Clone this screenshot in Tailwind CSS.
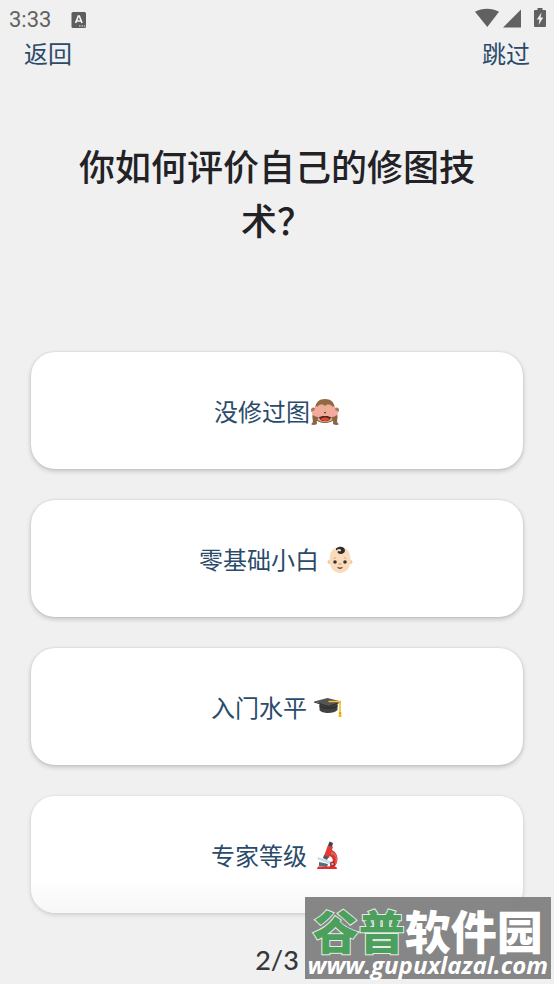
<!DOCTYPE html>
<html lang="zh-CN">
<head>
<meta charset="utf-8">
<meta name="viewport" content="width=device-width, initial-scale=1">
<title>修图技术评价</title>
<script src="https://cdn.jsdelivr.net/npm/@tailwindcss/browser@4"></script>
</head>
<body class="bg-[#f0f0f0] font-['Noto_Sans_CJK_SC',sans-serif] text-[#2a4b69]">
<div class="relative flex min-h-screen flex-col">
  <header>
    <div class="flex h-9 items-center justify-between pr-2 pl-[9px] text-[#616161]">
      <div class="flex items-center gap-5 pt-1">
        <span class="font-[Roboto,sans-serif] text-[22px] leading-6">3:33</span>
        <svg class="h-4 w-4" viewBox="0 0 16 16" aria-hidden="true"><rect x=".5" width="14.5" height="16" rx="1.5" fill="#5e5e5e"/><path d="M4.600 11 7.300 4h1L11 11M5.500 9h4.600" fill="none" stroke="#f4f4f4" stroke-width="1.700"/><path d="M8 14h1.500M10.500 14H12M13 14h1.200" stroke="#f4f4f4" stroke-width="1.200"/></svg>
      </div>
      <div class="flex items-center gap-1">
        <svg class="h-5 w-6" viewBox="0 0 24 20" fill="#616161" aria-hidden="true"><path d="M0 3.700C7-.3 17-.3 24 3.700L12.300 19Z"/></svg>
        <svg class="h-5 w-[19px]" viewBox="0 0 19 20" fill="#616161" aria-hidden="true"><path d="M18 1.500v18H0Z"/></svg>
        <svg class="ml-2 h-5 w-3" viewBox="0 0 12 20" aria-hidden="true"><path d="M3.500 0h5v2H11q1 0 1 1v15q0 1-1 1H1q-1 0-1-1V3q0-1 1-1h2.500Z" fill="#616161"/><path d="M7.500 4.500 2.800 11.500h2.700L4.600 17 9.200 9.500H6.500Z" fill="#f4f4f4"/></svg>
      </div>
    </div>
    <nav class="flex justify-between px-6 text-[24px] leading-[34px]">
      <button type="button">返回</button>
      <button type="button">跳过</button>
    </nav>
  </header>
  <main class="flex flex-col px-[31px] pt-[68px]">
    <h1 class="px-10 text-center text-[36px] leading-[54px] font-medium text-[#222226]">你如何评价自己的修图技术？</h1>
    <div class="mt-[106px] flex flex-col gap-[31px] text-[24px] leading-9">
      <button type="button" class="flex min-h-[117px] items-center justify-center rounded-3xl bg-white px-4 py-10 shadow-[0_2px_5px_rgba(0,0,0,0.2),0_0_2px_rgba(0,0,0,0.12)]">
        <span>没修过图</span>
        <svg class="h-[30px] w-[30px]" viewBox="0 0 30 30" role="img" aria-label="非礼勿视">
          <circle cx="3.500" cy="14" r="2.500" fill="#a77b56"/><circle cx="26.500" cy="14" r="2.500" fill="#a77b56"/>
          <path d="M15 3c7 0 10 4.500 10 11 3 3 2 13-10 13S2 17 5 14C5 7.500 8 3 15 3Z" fill="#916a45"/>
          <path d="M15 10c3-3 8-1 8 3 0 2-1 3 0 5 2 5-2 8-8 8s-10-3-8-8c1-2 0-3 0-5 0-4 5-6 8-3Z" fill="#e0b58c"/>
          <path d="M9 20h12c0 3.500-2.500 5.200-6 5.200S9 23.500 9 20Z" fill="#492b24"/><path d="M10.500 23c2-2 7-2 9 0-2 2.500-7 2.500-9 0Z" fill="#f44336"/>
          <path d="M13 16h4l-2 1.500Z" fill="#5a4032"/>
          <path d="M1 28c4-2 0-6 2-10l6 1c0 4-3 4-2 9q-4 2-6 0ZM29 28c-4-2 0-6-2-10l-6 1c0 4 3 4 2 9q4 2 6 0Z" fill="#8b6543"/>
          <path d="M3 19c-2-2-1-5 1-4l1-3c0-2 2-2 3-1 1-2 2-1 3 0 1-1 2 0 2 1 1 0 1 1 1 2v2c0 4-3 5-6 5-2 0-3-1-5-2ZM27 19c2-2 1-5-1-4l-1-3c0-2-2-2-3-1-1-2-2-1-3 0-1-1-2 0-2 1-1 0-1 1-1 2v2c0 4 3 5 6 5 2 0 3-1 5-2Z" fill="#f5aa9e"/>
        </svg>
      </button>
      <button type="button" class="flex min-h-[117px] items-center justify-center gap-[6px] rounded-3xl bg-white px-4 py-10 shadow-[0_2px_5px_rgba(0,0,0,0.2),0_0_2px_rgba(0,0,0,0.12)]">
        <span>零基础小白</span>
        <svg class="h-[30px] w-[30px]" viewBox="0 0 30 30" role="img" aria-label="婴儿">
          <circle cx="4.500" cy="18" r="2" fill="#f1c6a4"/><circle cx="25.500" cy="18" r="2" fill="#f1c6a4"/>
          <path d="M15 3c7 0 10.500 5 10.500 13S21 29 15 29 4.500 24 4.500 16 8 3 15 3Z" fill="#fadcbc"/>
          <path d="M11 4.500C15 1 20 3 20 6.500S15 11 13 9c-1.500-1.500 1-3 2-1.500 2-.5 1-2.500-1-2.500-1 0-2 1-3 1.500Z" fill="#302c2b"/>
          <circle cx="10" cy="18" r="1.800" fill="#3b3432"/><circle cx="20" cy="18" r="1.800" fill="#3b3432"/>
          <path d="M8.500 14.500q1-1 2.500-.5M19 14q1.500-.5 2.500.5" fill="none" stroke="#d6aa83"/><path d="M13.500 20h3" stroke="#e1a77c" stroke-width="1.500"/>
          <path d="M12 22.800q3 1.200 6 0-.8 2.200-3 2.200t-3-2.200Z" fill="#5f4940"/>
        </svg>
      </button>
      <button type="button" class="flex min-h-[117px] items-center justify-center gap-[6px] rounded-3xl bg-white px-4 py-10 shadow-[0_2px_5px_rgba(0,0,0,0.2),0_0_2px_rgba(0,0,0,0.12)]">
        <span>入门水平</span>
        <svg class="h-[30px] w-[30px]" viewBox="0 0 30 30" role="img" aria-label="学士帽">
          <path d="M6.500 11v7c2 4 15 4 18 0v-7Z" fill="#424242"/><path d="M6.500 13c5 3 13 3 18 0v2c-4 3-14 3-18 0Z" fill="#333"/>
          <path d="M1 9.500 14.500 6 28 9.500 15.500 14Z" fill="#555"/><path d="m1 9.500 14.500 4.500L28 9.500v1L15.500 15 1 10.500Z" fill="#303030"/>
          <path d="M15.500 9.500H27v12" fill="none" stroke="#fbc02d" stroke-width="1.700"/><path d="M26 20h2.200l.3 5h-3Z" fill="#f6b51c"/><path d="M26 21h2.200" stroke="#d68c12"/>
        </svg>
      </button>
      <button type="button" class="flex min-h-[117px] items-center justify-center gap-[6px] rounded-3xl bg-linear-to-b from-white from-70% to-[#f7f7f7] px-4 py-10 shadow-[0_2px_5px_rgba(0,0,0,0.13),0_0_2px_rgba(0,0,0,0.1)]">
        <span>专家等级</span>
        <svg class="h-[30px] w-[30px]" viewBox="0 0 30 30" role="img" aria-label="显微镜">
          <path d="M16 9c10 2 11 14 4 19h-5c7-5 6-11 0-13Z" fill="#dc2f2f"/>
          <path d="M18 12c6 2 7 9 3 13" fill="none" stroke="#f15b50" stroke-width="1.500"/>
          <path d="m15 5 5 2-4 11-5-2Z" fill="#e53935"/><path d="m16.500 1.500 3.500 1.500-1 4-4-1.500Z" fill="#37474f"/><path d="m11 15 4.500 2-1.500 3-4-2Z" fill="#455a64"/>
          <path d="m5 17 14 5-1 2.500L4 19Z" fill="#c4dce8"/><path d="m6 22 9 2-1 3-8-1Z" fill="#546e7a"/>
          <path d="M5 26.500h17q2 0 2 2.500H4Z" fill="#e22d30"/><circle cx="19.500" cy="24" r="2.500" fill="#ad2026"/><circle cx="19.500" cy="24" r="1.200" fill="#b0bec5"/><circle cx="19.500" cy="14" r="1.300" fill="#78909c"/>
        </svg>
      </button>
    </div>
  </main>
  <footer class="mt-auto pb-2 text-center font-[Lato,sans-serif] text-[27px] leading-8 font-medium text-[#37373b]">2/3</footer>
  <aside class="absolute right-[3px] bottom-[5px] flex flex-col items-center bg-[#808080]/95 px-[3px] pt-[10px] whitespace-nowrap text-white">
    <strong class="px-1 text-[46px] leading-[44px] font-black"><span class="text-[#4c9f5c] [-webkit-text-stroke:2px_#e4ede5] [paint-order:stroke_fill]">谷普</span>软件园</strong>
    <span class="font-['Open_Sans',sans-serif] text-[24px] leading-7 font-bold italic">www.gupuxlazal.com</span>
  </aside>
</div>
</body>
</html>
